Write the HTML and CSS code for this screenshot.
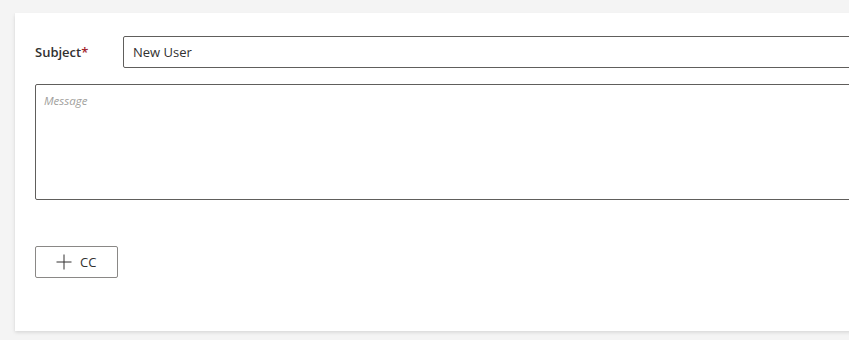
FILE: index.html
```html
<!DOCTYPE html>
<html>
<head>
<meta charset="utf-8">
<link rel="stylesheet" href="styles.css">
</head>
<body>
<div class="card">
  <div class="row">
    <label class="label">Subject<span class="req">*</span></label>
    <div class="input">New User</div>
  </div>
  <div class="textarea"><span class="placeholder">Message</span></div>
  <button class="btn">
    <svg class="plus" width="16" height="16" viewBox="0 0 16 16"><path d="M8 0.5V15.5M0.5 8H15.5" stroke="#323130" stroke-width="1" fill="none"/></svg>
    <span>CC</span>
  </button>
</div>
</body>
</html>
```
FILE: styles.css
```css
html, body {
  margin: 0;
  padding: 0;
  background: #f4f4f4;
  overflow: hidden;
  width: 849px;
  height: 340px;
}
body {
  font-family: "Open Sans", "Noto Sans", sans-serif;
  color: #323130;
  padding: 13px 0 0 15px;
  box-sizing: border-box;
}
.card {
  width: 900px;
  height: 318px;
  box-sizing: border-box;
  background: #fff;
  padding: 23px 0 0 20px;
  box-shadow: 0 1.6px 3.6px rgba(0,0,0,0.13), 0 0.3px 0.9px rgba(0,0,0,0.11);
}
.row {
  display: flex;
  align-items: center;
}
.label {
  width: 88px;
  font-size: 13px;
  font-weight: 600;
  color: #323130;
}
.req {
  color: #a4262c;
}
.input {
  flex: 1;
  height: 32px;
  box-sizing: border-box;
  border: 1px solid #605e5c;
  border-radius: 2px;
  font-size: 13px;
  line-height: 30px;
  padding: 0 9px;
  color: #323130;
}
.textarea {
  margin-top: 16px;
  height: 116px;
  box-sizing: border-box;
  border: 1px solid #605e5c;
  border-radius: 2px;
  padding: 3px 8px;
}
.placeholder {
  font-size: 11.5px;
  font-style: italic;
  color: #a19f9d;
}
.btn {
  margin-top: 46px;
  height: 32px;
  width: 83px;
  box-sizing: border-box;
  border: 1px solid #8a8886;
  border-radius: 2px;
  background: #fff;
  display: flex;
  align-items: center;
  padding: 0 0 0 20px;
  gap: 8px;
  font-family: "Open Sans", "Noto Sans", sans-serif;
  font-size: 13px;
  color: #323130;
}
.plus {
  display: block;
}
```
